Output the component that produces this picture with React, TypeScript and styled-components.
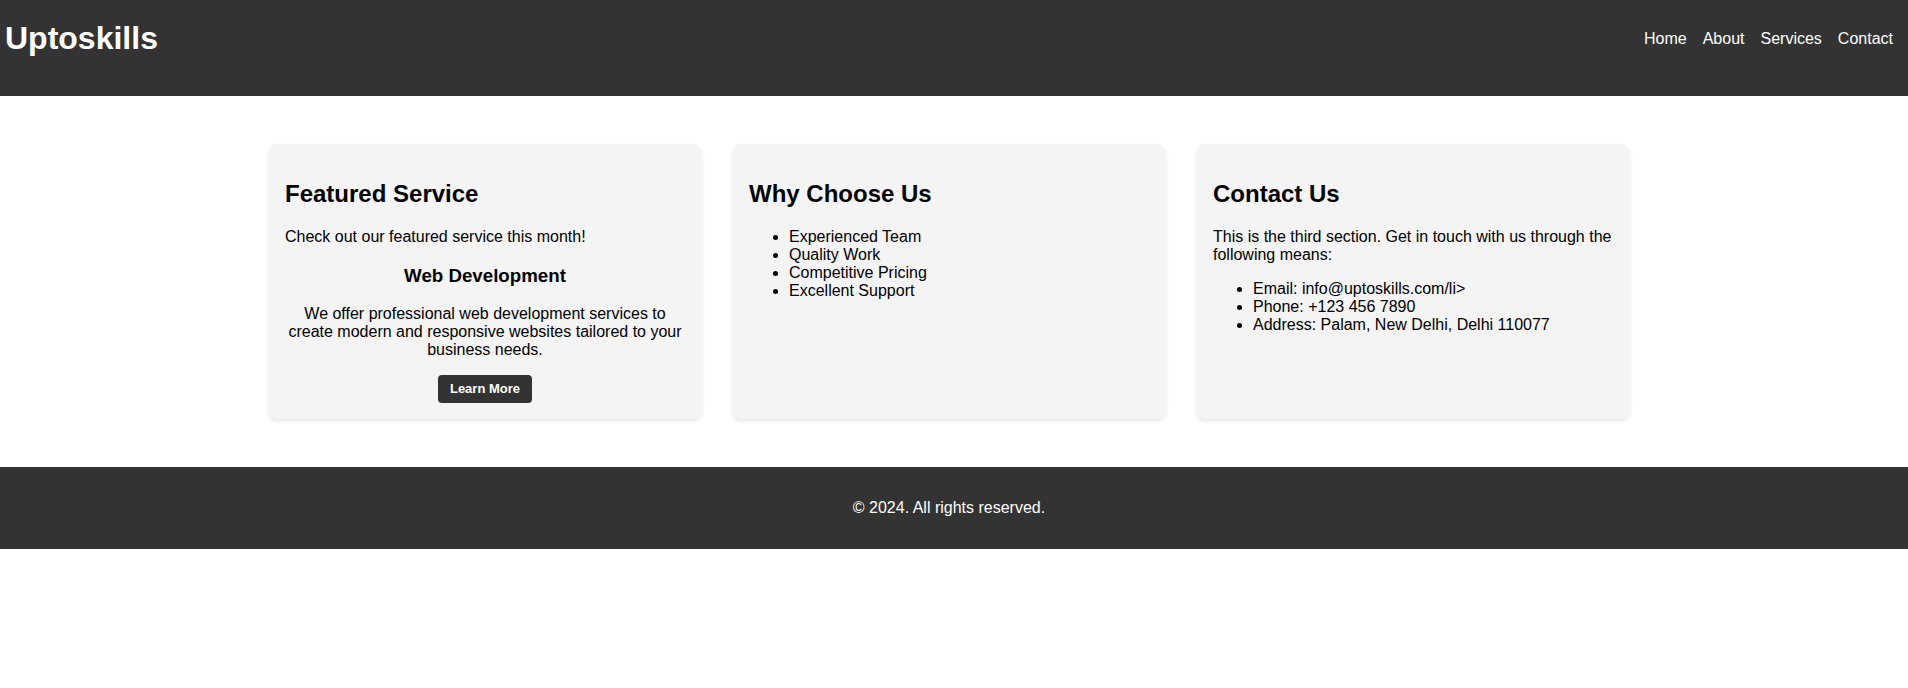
import React from "react";
import styled, { createGlobalStyle } from "styled-components";

const GlobalStyle = createGlobalStyle`
  html, body {
    margin: 0;
    padding: 0;
    background: #ffffff;
    font-family: "Liberation Sans", Arial, sans-serif;
    color: #000000;
  }
`;

const Header = styled.header`
  background: #333333;
  color: #ffffff;
  display: flex;
  justify-content: space-between;
  align-items: center;
  padding: 20px 15px 39px 5px;
`;

const Logo = styled.h1`
  margin: 0;
  font-size: 32px;
  font-weight: bold;
  line-height: 37px;
`;

const NavList = styled.ul`
  list-style: none;
  margin: 0;
  padding: 0;
  display: flex;
  gap: 16px;
`;

const NavLink = styled.a`
  color: #ffffff;
  text-decoration: none;
  font-size: 16px;
  line-height: 18px;
`;

const Main = styled.main`
  display: flex;
  justify-content: center;
  align-items: stretch;
  gap: 32px;
  padding: 48px 10px 48px 0;
`;

const Card = styled.section`
  width: 400px;
  padding: 16px;
  background: #f4f4f4;
  border-radius: 8px;
  box-shadow: 0 2px 4px rgba(0, 0, 0, 0.1);
`;

const CardTitle = styled.h2`
  font-size: 24px;
  font-weight: bold;
  margin: 19.92px 0;
`;

const Text = styled.p`
  font-size: 16px;
  margin: 16px 0;
  line-height: normal;
`;

const Centered = styled.div`
  text-align: center;
`;

const SubTitle = styled.h3`
  font-size: 18.72px;
  font-weight: bold;
  margin: 18.72px 0;
`;

const List = styled.ul`
  margin: 16px 0;
  padding-left: 40px;
  font-size: 16px;
`;

const Button = styled.button`
  background: #333333;
  color: #ffffff;
  border: none;
  border-radius: 4px;
  padding: 6px 12px;
  font-family: "Liberation Sans", Arial, sans-serif;
  font-size: 13px;
  font-weight: bold;
  line-height: 16px;
  cursor: pointer;
`;

const Footer = styled.footer`
  background: #333333;
  color: #ffffff;
  text-align: center;
  padding: 16px 10px 16px 0;
`;

const navItems = ["Home", "About", "Services", "Contact"];

export default function App() {
  return (
    <>
      <GlobalStyle />
      <Header>
        <Logo>Uptoskills</Logo>
        <nav>
          <NavList>
            {navItems.map((n) => (
              <li key={n}>
                <NavLink href="#">{n}</NavLink>
              </li>
            ))}
          </NavList>
        </nav>
      </Header>
      <Main>
        <Card>
          <CardTitle>Featured Service</CardTitle>
          <Text>Check out our featured service this month!</Text>
          <Centered>
            <SubTitle>Web Development</SubTitle>
            <Text>
              We offer professional web development services to create modern
              and responsive websites tailored to your business needs.
            </Text>
            <Button>Learn More</Button>
          </Centered>
        </Card>
        <Card>
          <CardTitle>Why Choose Us</CardTitle>
          <List>
            <li>Experienced Team</li>
            <li>Quality Work</li>
            <li>Competitive Pricing</li>
            <li>Excellent Support</li>
          </List>
        </Card>
        <Card>
          <CardTitle>Contact Us</CardTitle>
          <Text>
            This is the third section. Get in touch with us through the
            following means:
          </Text>
          <List>
            <li>Email: info@uptoskills.com/li&gt;</li>
            <li>Phone: +123 456 7890</li>
            <li>Address: Palam, New Delhi, Delhi 110077</li>
          </List>
        </Card>
      </Main>
      <Footer>
        <Text>© 2024. All rights reserved.</Text>
      </Footer>
    </>
  );
}
